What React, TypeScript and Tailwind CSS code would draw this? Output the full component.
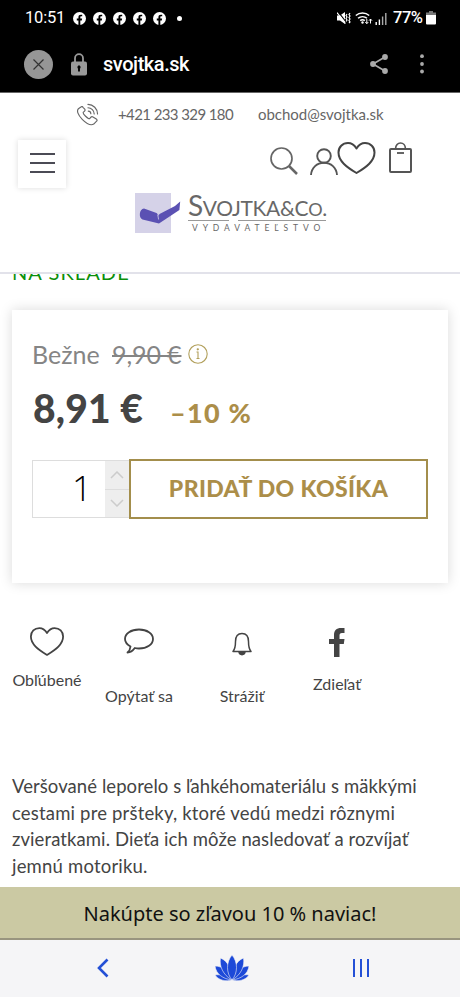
import type { ReactNode } from "react";
import { clsx } from "clsx";

function FacebookDot() {
    return (
        <svg viewBox="0 0 24 24" className="h-[13px] w-[13px]">
            <circle cx="12" cy="12" r="12" fill="#fff" />
            <path d="M10 24v-8.500H7V12h3V9.500C10 6.500 11.800 5 14.500 5H17v3h-1.700C14 8 13.500 8.700 13.500 9.700V12h3.300l-.6 3.500h-2.700V24z" fill="#000" />
        </svg>
    );
}

function StatusBar() {
    return (
        <div className="flex h-9 items-center pl-[25px] pr-6 font-[Roboto,sans-serif] text-white">
            <span className="w-[41px] text-[16.500px] leading-5 tracking-[-0.200px] whitespace-nowrap">10:51</span>
            <div className="ml-[7px] flex gap-[7px]">
                {[0, 1, 2, 3, 4].map((i) => (
                    <FacebookDot key={i} />
                ))}
            </div>
            <span className="ml-[11px] h-[5px] w-[5px] rounded-full bg-white" />
            <div className="ml-auto flex items-center">
                {/* muted + vibrate */}
                <svg viewBox="0 0 14 14" className="h-[14px] w-[14px]" fill="none" stroke="#fff">
                    <path d="M0 4.500h3L8 1v12L3 9.500H0z" fill="#fff" stroke="none" />
                    <path d="M1.200 .8 9.500 11.500" stroke="#000" strokeWidth="1.200" />
                    <path d="M0 1.500 8.500 12.500" strokeWidth="1.100" />
                    <path d="M10 3l-1 1.500 1 1.500-1 1.500 1 1.500-1 1.500M13 2l-1 1.500 1 1.500-1 1.500 1 1.500-1 1.500 1 1.500-1 1" strokeWidth="1.200" />
                </svg>
                <svg viewBox="0 0 18 14" className="ml-[4px] h-[14px] w-[18px]" fill="none" stroke="#fff" strokeWidth="1.500">
                    <path d="M.8 4.500a10 10 0 0 1 13.400 0M3 7.300a7 7 0 0 1 9 0M5.200 9.700a3.800 3.800 0 0 1 4.600 0" />
                    <circle cx="7.500" cy="11.500" r="1.200" fill="#fff" stroke="none" />
                    <path d="M11.800 8v4.500m-1.500-1.500 1.500 1.700 1.500-1.700M15.500 12.500V8m-1.500 1.700L15.500 8 17 9.700" strokeWidth="1" />
                </svg>
                <svg viewBox="0 0 12 12" className="ml-[2px] mt-px h-3 w-3">
                    <path d="M.5 9h1.400v3H.5zM3.700 6.500h1.400V12H3.700z" fill="#fff" />
                    <path d="M6.900 3.500h1.400V12H6.900zM10.100 0h1.400v12h-1.400z" fill="#aaa" />
                </svg>
                <span className="ml-[6px] w-[32px] text-[16.500px] font-medium leading-5 tracking-[-0.500px] whitespace-nowrap">77%</span>
                <svg viewBox="0 0 10 14" className="ml-px h-[14px] w-[10px]">
                    <path d="M3 0h4v1.500h3V5H0V1.500h3z" fill="#777" />
                    <path d="M0 4h10v8.500a1 1 0 0 1-1 1H1a1 1 0 0 1-1-1z" fill="#fff" />
                </svg>
            </div>
        </div>
    );
}

function BrowserBar() {
    return (
        <div className="flex h-14 items-center pl-6 pr-9">
            <svg viewBox="0 0 29 29" className="h-[29px] w-[29px]">
                <circle cx="14.500" cy="14.500" r="14.500" fill="#969696" />
                <path d="m9.500 9.500 10 10m0-10-10 10" stroke="#333" strokeWidth="1.200" />
            </svg>
            <svg viewBox="0 0 16 23" className="ml-[18px] h-[23px] w-4">
                <path d="M4 10V5.200a4 4 0 0 1 8 0V10" fill="none" stroke="#999" strokeWidth="1.800" />
                <rect y="8.500" width="16" height="14" rx="2" fill="#999" />
                <path d="M8 12.500v6M6.500 14.200h3" stroke="#000" strokeWidth="1.900" />
            </svg>
            <span className="ml-4 font-[Roboto,sans-serif] text-[20px] font-medium leading-6 tracking-[-0.450px] text-white">svojtka.sk</span>
            <svg viewBox="0 0 18 20" className="ml-auto h-5 w-[18px]" fill="#aaa">
                <path d="M15 3 3 10l12 7" fill="none" stroke="#aaa" strokeWidth="1.700" />
                <circle cx="15" cy="3" r="2.900" />
                <circle cx="3" cy="10" r="2.900" />
                <circle cx="15" cy="17" r="2.900" />
            </svg>
            <svg viewBox="0 0 4 20" className="ml-[32px] h-5 w-1" fill="#aaa">
                <circle cx="2" cy="2.200" r="1.900" />
                <circle cx="2" cy="10" r="1.900" />
                <circle cx="2" cy="17.500" r="1.900" />
            </svg>
        </div>
    );
}

function HeartIcon({ className }: { className: string }) {
    return (
        <svg viewBox="0 0 38 32" className={className} fill="none" stroke="#444" strokeWidth="2" strokeLinejoin="round">
            <path d="M19 6.500C16.500 2.500 13.500 1 10.500 1 5 1 1 5 1 10.500 1 19 9 25 19 31c10-6 18-12 18-20.500C37 5 33 1 27.500 1 24.500 1 21.500 2.500 19 6.500Z" />
        </svg>
    );
}

function Logo() {
    return (
        <div className="flex h-[41px]">
            <svg viewBox="0 0 46 41" className="h-[41px] w-[46px]">
                <path d="M0 0h36v40H0z" fill="#d5d2e8" />
                <path d="M9 15.500 21.500 20c1 .5 1.300 1.500 1.500 3 .7-1.300 1.500-2 3-2.700L40 13l5.200-4.500-.8 8.500L24 30.500 7.500 26.500C3.500 25 4 16 9 15.500Z" fill="#5b51b3" />
                <path d="m22.800 22 .8 4.500" stroke="#d5d2e8" strokeWidth=".8" />
            </svg>
            <div className="ml-[7px] w-[138px] font-[Lato,sans-serif] text-[#686868]">
                <div className="h-[27px] text-[21px] leading-[24px] tracking-[-0.350px] whitespace-nowrap">
                    <span className="text-[28px]">S</span>VOJTKA&amp;C<span className="text-[18px]">O</span>.
                </div>
                <div className="flex gap-[9px]">
                    <div className="h-px w-[41px] bg-[#999]" />
                    <div className="h-px flex-1 bg-[#999]" />
                </div>
                <div className="mt-[2px] pl-1 text-[8.500px] leading-[11px] tracking-[4.900px] whitespace-nowrap">VYDAVATEĽSTVO</div>
            </div>
        </div>
    );
}

function SiteHeader() {
    return (
        <header className="h-[182px] border-t border-b-2 border-t-[#666] border-b-[#e2e2ea] bg-white">
            <div className="flex h-11 items-center pb-px pl-[76px] font-[Lato,sans-serif] text-[15px] text-[#666]">
                <svg viewBox="0 0 24 24" className="h-[23px] w-[23px]" fill="none" stroke="#666" strokeWidth="1.200" strokeLinejoin="round" strokeLinecap="round">
                    <path d="M5.500 4 2.500 6c-2 2-.5 6.500 4 11s9 7 12 5l3-3c.8-.8.6-1.600-.3-2.200l-3.500-2.300c-1-.6-1.700-.3-2.400.5l-.8 1c-.7.8-2 .2-4.500-2.200s-3-3.500-2.300-4.300l1-.8c.9-.7 1-1.400.4-2.400L7.300 4.500C6.800 3.700 6.200 3.500 5.500 4Z" />
                    <path d="M12.500 1.500c5.500 0 10 4.500 10 10M12.500 5c3.500 0 6.500 3 6.500 6.500M12.800 8.500c1.600.1 2.600 1.200 2.700 2.700" />
                </svg>
                <span className="ml-[19px] w-[117px] pb-px tracking-[-0.600px] whitespace-nowrap">+421 233 329 180</span>
                <span className="ml-[23px] pb-px tracking-[-0.030px]">obchod@svojtka.sk</span>
            </div>
            <div className="flex pl-[18px] pr-12">
                <button className="mt-[3px] flex h-12 w-12 flex-col items-center justify-center gap-[7px] bg-white pb-[3px] shadow-[0_0_6px_rgba(0,0,0,0.14)]">
                    <span className="h-[2px] w-[25px] bg-[#4b4b55]" />
                    <span className="h-[2px] w-[25px] bg-[#4b4b55]" />
                    <span className="h-[2px] w-[25px] bg-[#4b4b55]" />
                </button>
                <div className="ml-auto flex pt-[5px]">
                    <svg viewBox="0 0 28 28" className="mt-[5px] h-7 w-7" fill="none" stroke="#666">
                        <circle cx="11.500" cy="11.500" r="10.500" strokeWidth="1.700" />
                        <path d="m19 19 8 8" strokeWidth="2.500" />
                    </svg>
                    <svg viewBox="0 0 28 28" className="ml-3 mt-[6px] h-7 w-7" fill="none" stroke="#555" strokeWidth="1.900">
                        <circle cx="14" cy="8" r="6.800" />
                        <path d="M1 27C1.500 19.500 7 14.800 14 14.800S26.500 19.500 27 27" />
                    </svg>
                    <HeartIcon className="-ml-px h-8 w-[39px]" />
                    <svg viewBox="0 0 23 31" className="ml-[13px] h-[31px] w-[23px]" fill="none" stroke="#555">
                        <rect x="1" y="7" width="21" height="23" rx="1" strokeWidth="2" />
                        <path d="M6.500 7c0-8 10-8 10 0" strokeWidth="1.700" />
                        <path d="M8 11h7" strokeWidth="1.800" />
                    </svg>
                </div>
            </div>
            <div className="mt-[5px] pl-[135px]">
                <Logo />
            </div>
        </header>
    );
}

function PurchaseCard() {
    return (
        <section className="mx-3 mt-[24px] h-[273px] bg-white px-[20px] pt-[28px] font-[Lato,sans-serif] shadow-[0_0_12px_rgba(0,0,0,0.15)]">
            <div className="flex h-8 items-center text-[25px] leading-8 text-[#858585]">
                <span className="w-[80px]">Bežne</span>
                <span className="w-[70px] tracking-[-0.100px] whitespace-nowrap line-through decoration-2">9,90 €</span>
                <svg viewBox="0 0 20 20" className="ml-[6px] h-5 w-5" fill="none" stroke="#b2a05c" strokeWidth="1.100">
                    <circle cx="10" cy="10" r="9.200" />
                    <path d="M8.500 8H10v6.500M8.500 14.500h3" />
                    <circle cx="9.800" cy="5.300" r=".6" fill="#b2a05c" />
                </svg>
            </div>
            <div className="flex h-[61px] items-baseline pt-[13px]">
                <span className="w-[138px] pl-px text-[39px] font-black leading-[50px] tracking-[0.200px] whitespace-nowrap text-[#444]">8,91 €</span>
                <span className="text-[27px] font-black leading-[50px] tracking-[1.300px] whitespace-nowrap text-[#ac8e49]">–10 %</span>
            </div>
            <div className="mt-[28px] flex items-center">
                <div className="flex h-[58px] w-[97px] border border-r-0 border-[#ddd]">
                    <span className="flex-1 pr-[13px] text-right font-['Open_Sans',sans-serif] text-[35px] font-light leading-[54px] text-black">1</span>
                    <div className="flex w-6 flex-col divide-y divide-[#ddd] bg-[#eee]">
                        <span className="flex flex-1 items-center justify-center">
                            <svg viewBox="0 0 14 8" className="h-2 w-[14px]" fill="none" stroke="#ccc" strokeWidth="1.500">
                                <path d="m1 7 6-6 6 6" />
                            </svg>
                        </span>
                        <span className="flex flex-1 items-center justify-center">
                            <svg viewBox="0 0 14 8" className="h-2 w-[14px]" fill="none" stroke="#ccc" strokeWidth="1.500">
                                <path d="m1 1 6 6 6-6" />
                            </svg>
                        </span>
                    </div>
                </div>
                <button className="h-[60px] w-[299px] border-2 border-[#a38e4c] pb-[2px] text-[23px] font-black tracking-[0.350px] whitespace-nowrap text-[#ac8e49]">
                    PRIDAŤ DO KOŠÍKA
                </button>
            </div>
        </section>
    );
}

function Action({ label, className, children }: { label: string; className: string; children: ReactNode }) {
    return (
        <div className={clsx("flex flex-col items-center", className)}>
            {children}
            <span className="mt-auto whitespace-nowrap">{label}</span>
        </div>
    );
}

function ProductActions() {
    return (
        <section className="mt-[44px] flex h-[84px] items-start pl-3 font-[Lato,sans-serif] text-[16px] leading-5 text-[#444]">
            <Action label="Obľúbené" className="h-[63px] w-[70px]">
                <HeartIcon className="h-[29px] w-[34px]" />
            </Action>
            <Action label="Opýtať sa" className="ml-6 h-[79px] w-[66px]">
                <svg viewBox="0 0 30 26" className="mt-px h-[26px] w-[30px]" fill="none" stroke="#444" strokeWidth="1.800" strokeLinejoin="round">
                    <path d="M6.500 18.500C3 16.500 1 14 1 11 1 5.500 7 1.500 15 1.500S29 5.500 29 11s-6 9.500-14 9.500c-1.500 0-3-.2-4.200-.5C9 22.500 6.500 24.500 3.500 24.500c1.800-1.500 2.800-3.500 3-6Z" />
                </svg>
            </Action>
            <Action label="Strážiť" className="ml-12 h-[79px] w-[44px]">
                <svg viewBox="0 0 20 24" className="mt-[5px] h-6 w-5" fill="none" stroke="#444" strokeWidth="1.500" strokeLinejoin="round">
                    <path d="M1 19.500c2.500-3 2.500-6 2.500-10C3.500 4.500 6 1.500 10 1.500s6.500 3 6.500 8c0 4 0 7 2.500 10Z" />
                    <path d="M7 20c.5 3.500 5.500 3.500 6 0Z" fill="#444" />
                </svg>
            </Action>
            <Action label="Zdieľať" className="ml-12 h-[67px] w-[50px]">
                <svg viewBox="0 0 16 29" className="mt-px h-[29px] w-4" fill="#444">
                    <path d="M5 29V16H0v-5h5V7c0-4.500 2.500-7 7-7h3.500v5H13c-2 0-2.500 1-2.500 2.500V11h5l-.7 5h-4.300v13z" />
                </svg>
            </Action>
        </section>
    );
}

function LotusIcon() {
    return (
        <svg viewBox="0 0 34 26" className="h-[26px] w-[34px]" fill="#1c49d8" stroke="#f5f5f7" strokeWidth=".6">
            <path d="M17 25C11 27 3 25 0 20c7-1 13 1 17 5ZM17 25c6 2 14 0 17-5-7-1-13 1-17 5Z" />
            <path d="M17 25C8 24 1 19 0 11c8 0 14 6 17 14ZM17 25c9-1 16-6 17-14-8 0-14 6-17 14Z" />
            <path d="M17 25C8 20 4 11 5.500 3 13 6 17 15 17 25ZM17 25c9-5 13-14 11.500-22C21 6 17 15 17 25Z" />
            <path d="M17 25c-6-7-6-18 0-25 6 7 6 18 0 25Z" />
        </svg>
    );
}

function BottomNav() {
    return (
        <nav className="flex h-[57px] items-center bg-[#f5f5f7] pb-[2px] pl-[97px] pr-[91px]">
            <svg viewBox="0 0 12 20" className="h-5 w-3" fill="none" stroke="#2450d6" strokeWidth="2.600">
                <path d="M10.500 1.500 2 10l8.500 8.500" />
            </svg>
            <div className="ml-[106px]">
                <LotusIcon />
            </div>
            <div className="ml-auto flex gap-[5px]">
                <span className="h-[18px] w-[2px] bg-[#2450d6]" />
                <span className="h-[18px] w-[2px] bg-[#2450d6]" />
                <span className="h-[18px] w-[2px] bg-[#2450d6]" />
            </div>
        </nav>
    );
}

export default function App() {
    return (
        <div className="flex h-[997px] w-[460px] flex-col overflow-hidden bg-white">
            <div className="h-[92px] shrink-0 bg-black">
                <StatusBar />
                <BrowserBar />
            </div>
            <SiteHeader />

            <main className="flex-1">
                {/* scrolled halfway under the header */}
                <div className="h-3 overflow-hidden pl-3">
                    <p className="-mt-[14px] font-[Lato,sans-serif] text-[20px] leading-6 tracking-[1.100px] text-[#0b8f0b]">NA SKLADE</p>
                </div>
                <PurchaseCard />
                <ProductActions />
                <p className="mt-[62px] pl-3 font-[Lato,sans-serif] text-[18.500px] leading-[26.700px] whitespace-nowrap text-[#444]">
                    <span className="tracking-[0.070px]">Veršované leporelo s ľahkéhomateriálu s mäkkými</span>
                    <br />
                    <span className="tracking-[0.180px]">cestami pre pršteky, ktoré vedú medzi rôznymi</span>
                    <br />
                    <span className="tracking-[0.090px]">zvieratkami. Dieťa ich môže nasledovať a rozvíjať</span>
                    <br />
                    <span className="tracking-[0.200px]">jemnú motoriku.</span>
                </p>
            </main>

            <div className="flex h-[53px] shrink-0 items-center justify-center border-b-2 border-[#99957f] bg-[#cbc9a3] pt-[2px] font-['Noto_Sans',sans-serif] text-[20px] text-[#111]">
                Nakúpte so zľavou 10 % naviac!
            </div>
            <BottomNav />
        </div>
    );
}
